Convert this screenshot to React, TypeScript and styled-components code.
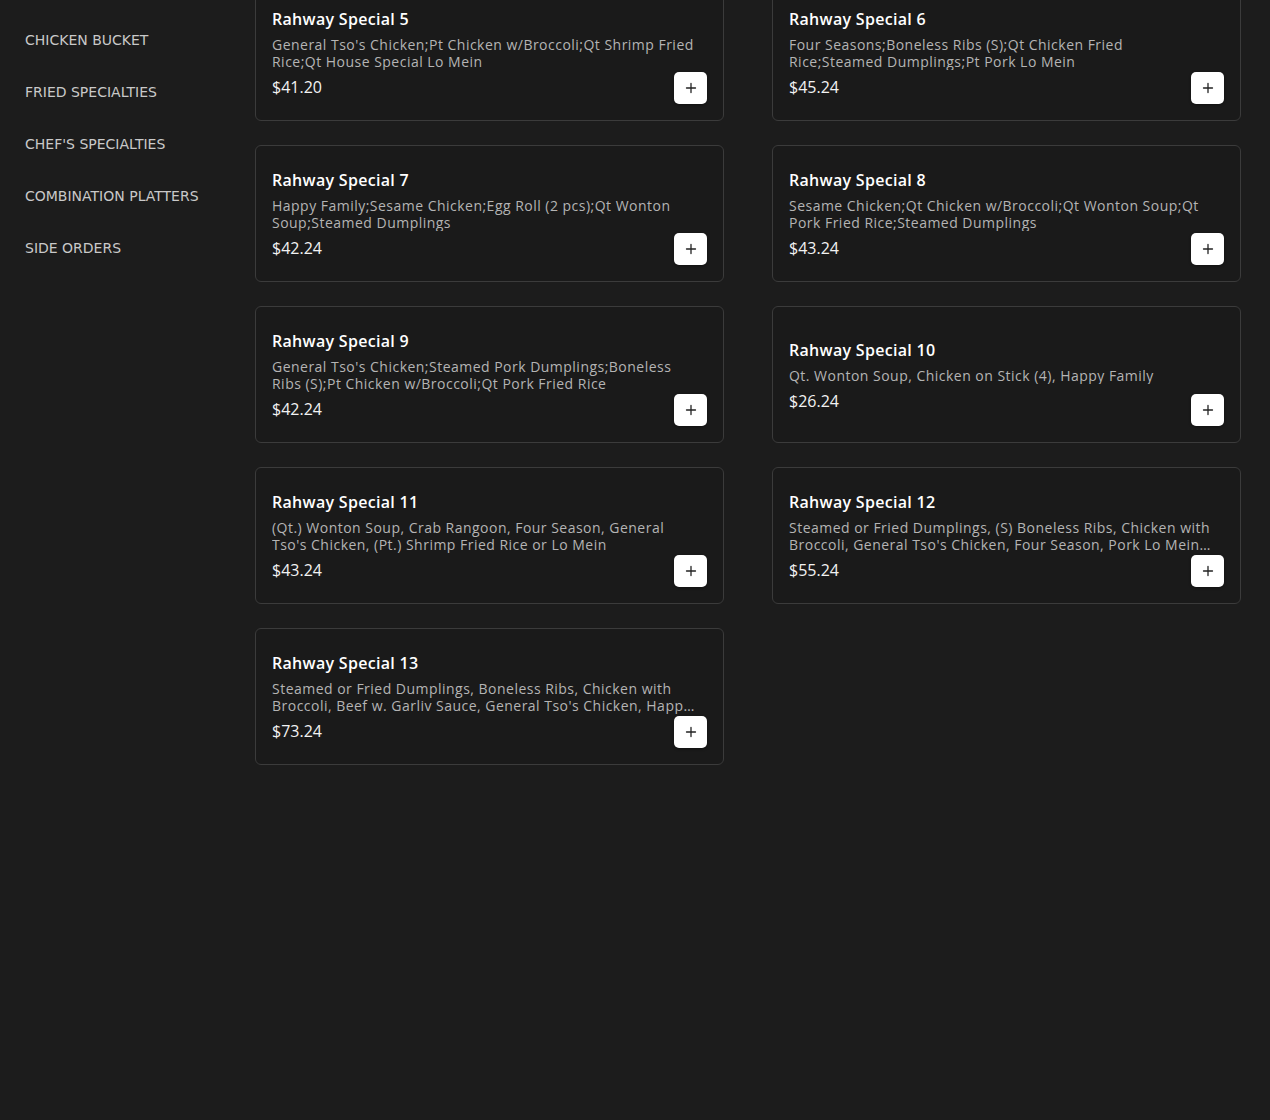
import styled, { createGlobalStyle } from 'styled-components';

const GlobalStyle = createGlobalStyle`
  html, body {
    margin: 0;
    padding: 0;
    background: #1c1c1c;
    min-height: 100%;
  }
  body {
    font-family: "Open Sans", "Liberation Sans", sans-serif;
    overflow: hidden;
  }
`;

const Page = styled.div`
  display: flex;
  min-height: 1120px;
  background: #1c1c1c;
`;

const Sidebar = styled.nav`
  width: 230px;
  flex-shrink: 0;
  padding: 32px 0 0 25px;
  display: flex;
  flex-direction: column;
  gap: 35px;
`;

const NavItem = styled.a`
  font-family: "DejaVu Sans", sans-serif;
  font-size: 14px;
  line-height: 17px;
  color: #c9c9c9;
  text-transform: uppercase;
  text-decoration: none;
  cursor: pointer;
`;

const Main = styled.main`
  flex: 1;
  padding-right: 29px;
`;

const Grid = styled.div`
  display: grid;
  grid-template-columns: repeat(2, 469px);
  column-gap: 48px;
  row-gap: 24px;
  margin-top: -16px;
`;

const Card = styled.div`
  position: relative;
  box-sizing: border-box;
  height: 137px;
  border: 1px solid #3b3b3b;
  border-radius: 6px;
  background: #1a1a1a;
  padding: 18px 28px 16px 16px;
  display: flex;
  flex-direction: column;
  justify-content: center;
`;

const Title = styled.h3`
  margin: -3px 0 5px;
  font-size: 16px;
  line-height: 24px;
  font-weight: 600;
  letter-spacing: 0.3px;
  color: #ffffff;
`;

const Desc = styled.p`
  margin: 0 0 5px;
  font-size: 14px;
  line-height: 17px;
  letter-spacing: 0.48px;
  color: #b4b4b4;
  display: -webkit-box;
  -webkit-line-clamp: 2;
  -webkit-box-orient: vertical;
  overflow: hidden;
`;

const Price = styled.span`
  font-size: 16px;
  line-height: 24px;
  color: #f2f2f2;
  margin-bottom: -2px;
`;

const AddButton = styled.button`
  position: absolute;
  right: 16px;
  bottom: 16px;
  width: 33px;
  height: 32px;
  padding: 0;
  border: none;
  border-radius: 5px;
  background: #ffffff;
  box-shadow: 0 1px 3px rgba(0, 0, 0, 0.4);
  display: flex;
  align-items: center;
  justify-content: center;
  cursor: pointer;
`;

type Item = { name: string; desc: string; price: string };

const categories = [
  'Chicken Bucket',
  'Fried Specialties',
  "Chef's Specialties",
  'Combination Platters',
  'Side Orders',
];

const items: Item[] = [
  {
    name: 'Rahway Special 5',
    desc: "General Tso's Chicken;Pt Chicken w/Broccoli;Qt Shrimp Fried Rice;Qt House Special Lo Mein",
    price: '$41.20',
  },
  {
    name: 'Rahway Special 6',
    desc: 'Four Seasons;Boneless Ribs (S);Qt Chicken Fried Rice;Steamed Dumplings;Pt Pork Lo Mein',
    price: '$45.24',
  },
  {
    name: 'Rahway Special 7',
    desc: 'Happy Family;Sesame Chicken;Egg Roll (2 pcs);Qt Wonton Soup;Steamed Dumplings',
    price: '$42.24',
  },
  {
    name: 'Rahway Special 8',
    desc: 'Sesame Chicken;Qt Chicken w/Broccoli;Qt Wonton Soup;Qt Pork Fried Rice;Steamed Dumplings',
    price: '$43.24',
  },
  {
    name: 'Rahway Special 9',
    desc: "General Tso's Chicken;Steamed Pork Dumplings;Boneless Ribs (S);Pt Chicken w/Broccoli;Qt Pork Fried Rice",
    price: '$42.24',
  },
  {
    name: 'Rahway Special 10',
    desc: 'Qt. Wonton Soup, Chicken on Stick (4), Happy Family',
    price: '$26.24',
  },
  {
    name: 'Rahway Special 11',
    desc: "(Qt.) Wonton Soup, Crab Rangoon, Four Season, General Tso's Chicken, (Pt.) Shrimp Fried Rice or Lo Mein",
    price: '$43.24',
  },
  {
    name: 'Rahway Special 12',
    desc: "Steamed or Fried Dumplings, (S) Boneless Ribs, Chicken with Broccoli, General Tso's Chicken, Four Season, Pork Lo Mein, Shrimp Fried Rice",
    price: '$55.24',
  },
  {
    name: 'Rahway Special 13',
    desc: "Steamed or Fried Dumplings, Boneless Ribs, Chicken with Broccoli, Beef w. Garliv Sauce, General Tso's Chicken, Happy Family, Qt. Wonton Soup",
    price: '$73.24',
  },
];

const PlusIcon = () => (
  <svg width="12" height="12" viewBox="0 0 12 12" aria-hidden="true">
    <path d="M6 1.5v9M1.5 6h9" stroke="#222" strokeWidth="1.3" strokeLinecap="round" />
  </svg>
);

export default function App() {
  return (
    <Page>
      <GlobalStyle />
      <Sidebar>
        {categories.map((c) => (
          <NavItem key={c}>{c}</NavItem>
        ))}
      </Sidebar>
      <Main>
        <Grid>
          {items.map((it) => (
            <Card key={it.name}>
              <Title>{it.name}</Title>
              <Desc>{it.desc}</Desc>
              <Price>{it.price}</Price>
              <AddButton aria-label={`Add ${it.name}`}>
                <PlusIcon />
              </AddButton>
            </Card>
          ))}
        </Grid>
      </Main>
    </Page>
  );
}
